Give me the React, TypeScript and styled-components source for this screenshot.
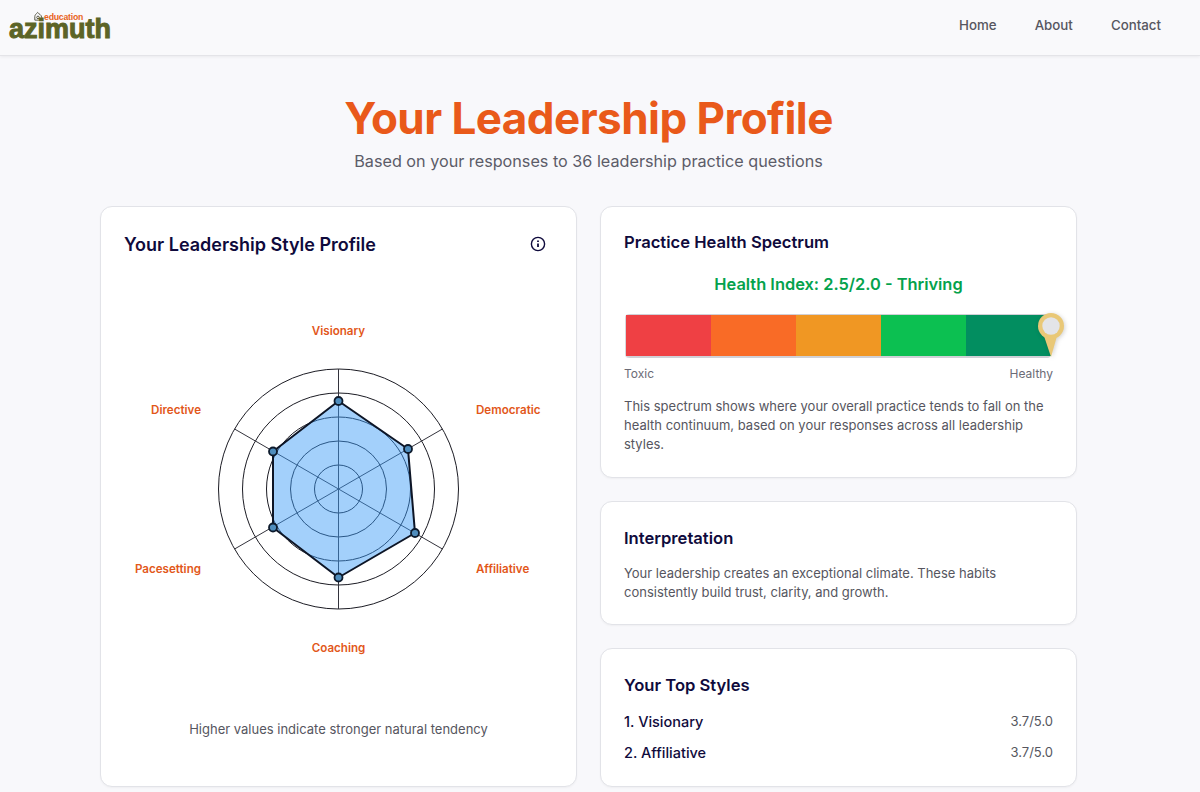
import React from 'react';
import styled, { createGlobalStyle } from 'styled-components';

const GlobalStyle = createGlobalStyle`
  * { box-sizing: border-box; }
  html, body { margin: 0; background: #f8f8fb; }
  body { font-family: Inter, "Liberation Sans", sans-serif; color: #0f0a3c; }
`;

const NAV_LINKS = ['Home', 'About', 'Contact'];
const SPECTRUM = ['#ef4044', '#f96b26', '#f09723', '#0cc051', '#028e60'];
const CENTER_X = 214.5;
const CENTER_Y = 209;
const RINGS = [24, 48, 72, 96, 120];
const SPOKES = [0, 60, 120, 180, 240, 300];

const AXIS_LABELS = [
  { text: 'Visionary', x: 214.5, y: 55, anchor: 'middle' },
  { text: 'Democratic', x: 352, y: 134, anchor: 'start' },
  { text: 'Affiliative', x: 352, y: 293, anchor: 'start' },
  { text: 'Coaching', x: 214.5, y: 372, anchor: 'middle' },
  { text: 'Pacesetting', x: 77, y: 293, anchor: 'end' },
  { text: 'Directive', x: 77, y: 134, anchor: 'end' },
];

const SCORE_POINTS = [
  [214.5, 121],
  [284, 169],
  [291, 253],
  [214.5, 297.5],
  [149, 247.5],
  [149, 171.5],
];

function spokeEnd(angle: number) {
  const radians = (angle * Math.PI) / 180;
  return {
    x: CENTER_X + 120 * Math.sin(radians),
    y: CENTER_Y - 120 * Math.cos(radians),
  };
}

function RadarChart() {
  return (
    <ChartSvg viewBox="0 0 429 400" width="429" height="400">
      {RINGS.map((radius) => (
        <circle key={radius} cx={CENTER_X} cy={CENTER_Y} r={radius} fill="none" stroke="#1c1c24" strokeWidth="1" />
      ))}
      {SPOKES.map((angle) => {
        const end = spokeEnd(angle);
        return <line key={angle} x1={CENTER_X} y1={CENTER_Y} x2={end.x} y2={end.y} stroke="#33333c" strokeWidth="1" />;
      })}
      <polygon
        points={SCORE_POINTS.map((point) => point.join(',')).join(' ')}
        fill="#3b9cf6"
        fillOpacity="0.47"
        stroke="#0d1526"
        strokeWidth="2"
        strokeLinejoin="round"
      />
      {SCORE_POINTS.map(([x, y]) => (
        <circle key={`${x}-${y}`} cx={x} cy={y} r="4" fill="#4f8dbd" stroke="#0d1a2c" strokeWidth="1.8" />
      ))}
      {AXIS_LABELS.map((label) => (
        <AxisLabel key={label.text} x={label.x} y={label.y} textAnchor={label.anchor}>
          {label.text}
        </AxisLabel>
      ))}
    </ChartSvg>
  );
}

function App() {
  return (
    <>
      <GlobalStyle />
      <Navbar>
        <Logo>
          <LogoTop>
            <svg width="10" height="11" viewBox="0 0 11 11" fill="none" stroke="#5a5a4a" strokeWidth="1.1">
              <path d="M2 9.5 V5.5 C2 3.5 4 2.5 5 1 C6 2.5 9.5 3.5 9.5 6.5 C9.5 8.5 8 9.5 6 9.5 z" />
              <circle cx="5.5" cy="6.5" r="1.4" />
            </svg>
            <span>education</span>
          </LogoTop>
          <LogoWord>azimuth</LogoWord>
        </Logo>
        <NavLinks>
          {NAV_LINKS.map((link) => (
            <NavLink key={link}>{link}</NavLink>
          ))}
        </NavLinks>
      </Navbar>

      <Main>
        <Header>
          <Title>Your Leadership Profile</Title>
          <Subtitle>Based on your responses to 36 leadership practice questions</Subtitle>
        </Header>

        <Columns>
          <ChartCard>
            <ChartHeader>
              <ChartTitle>Your Leadership Style Profile</ChartTitle>
              <svg width="16" height="16" viewBox="0 0 16 16" fill="none" stroke="#0f0a3c" strokeWidth="1.4">
                <circle cx="8" cy="8" r="6.6" />
                <path d="M8 7.4v3.6" strokeWidth="1.8" />
                <path d="M8 4.6v1.3" strokeWidth="1.8" />
              </svg>
            </ChartHeader>
            <RadarChart />
            <ChartNote>Higher values indicate stronger natural tendency</ChartNote>
          </ChartCard>

          <SideColumn>
            <SpectrumCard>
              <CardTitle>Practice Health Spectrum</CardTitle>
              <HealthIndex>Health Index: 2.5/2.0 - Thriving</HealthIndex>
              <SpectrumBar>
                {SPECTRUM.map((color) => (
                  <SpectrumSegment key={color} $color={color} />
                ))}
                <Marker>
                  <svg width="28" height="46" viewBox="0 0 28 46">
                    <path d="M7 24 L14 45 L20 24 z" fill="#e9c877" />
                    <circle cx="14" cy="14" r="13" fill="#e9c877" />
                    <circle cx="14" cy="14" r="8.7" fill="#e3e4e8" />
                  </svg>
                </Marker>
              </SpectrumBar>
              <SpectrumEnds>
                <span>Toxic</span>
                <span>Healthy</span>
              </SpectrumEnds>
              <BodyText>
                This spectrum shows where your overall practice tends to fall on the health continuum, based on your
                responses across all leadership styles.
              </BodyText>
            </SpectrumCard>

            <InterpretationCard>
              <CardTitle>Interpretation</CardTitle>
              <InterpretationText>
                Your leadership creates an exceptional climate. These habits consistently build trust, clarity, and
                growth.
              </InterpretationText>
            </InterpretationCard>

            <TopStylesCard>
              <CardTitle>Your Top Styles</CardTitle>
              <StyleList>
                <StyleRow>
                  <StyleName>1. Visionary</StyleName>
                  <StyleScore>3.7/5.0</StyleScore>
                </StyleRow>
                <StyleRow>
                  <StyleName>2. Affiliative</StyleName>
                  <StyleScore>3.7/5.0</StyleScore>
                </StyleRow>
              </StyleList>
            </TopStylesCard>
          </SideColumn>
        </Columns>
      </Main>
    </>
  );
}

const Navbar = styled.nav`
  height: 56px;
  display: flex;
  align-items: center;
  justify-content: space-between;
  padding: 0 39px 6px 9px;
  background: #f9f9fb;
  border-bottom: 1px solid #e4e4e8;
  box-shadow: 0 1px 3px rgba(0, 0, 0, 0.06);
`;

const Logo = styled.div`
  width: 102px;
  display: flex;
  flex-direction: column;
  margin-top: 1px;
`;

const LogoTop = styled.div`
  display: flex;
  align-items: center;
  gap: 1px;
  height: 9px;
  padding-left: 24px;
  font-family: "Liberation Sans", sans-serif;
  font-size: 8.7px;
  font-weight: 700;
  letter-spacing: -0.2px;
  color: #e8641c;
`;

const LogoWord = styled.div`
  font-family: "Liberation Sans", sans-serif;
  font-size: 27px;
  line-height: 17px;
  font-weight: 700;
  letter-spacing: 0;
  color: #5c6426;
  -webkit-text-stroke: 1px #5c6426;
`;

const NavLinks = styled.div`
  display: flex;
  gap: 38px;
`;

const NavLink = styled.a`
  font-size: 13.3px;
  font-weight: 500;
  color: #565660;
`;

const Main = styled.main`
  width: 977px;
  margin-left: 100px;
  padding-bottom: 5px;
`;

const Header = styled.header`
  padding-top: 34px;
  margin-bottom: 32px;
  text-align: center;
`;

const Title = styled.h1`
  margin: 0;
  font-size: 44px;
  line-height: 56px;
  font-weight: 700;
  letter-spacing: -0.55px;
  color: #e9591a;
`;

const Subtitle = styled.p`
  margin: 2px 0 0;
  font-size: 16.2px;
  line-height: 26px;
  color: #5c5c68;
`;

const Columns = styled.div`
  display: grid;
  grid-template-columns: 477px 477px;
  gap: 23px;
`;

const Card = styled.section`
  background: #ffffff;
  border: 1px solid #e2e3e8;
  border-radius: 12px;
  box-shadow: 0 1px 2px rgba(0, 0, 0, 0.04);
`;

const ChartCard = styled(Card)`
  height: 581px;
  padding: 23px 23px;
`;

const ChartHeader = styled.div`
  height: 28px;
  display: flex;
  align-items: center;
  justify-content: space-between;
  padding-right: 7px;
`;

const ChartTitle = styled.h2`
  margin: 0;
  font-size: 18px;
  font-weight: 600;
`;

const ChartSvg = styled.svg`
  display: block;
  margin: 22px 0 0;
`;

const AxisLabel = styled.text`
  font-size: 11.6px;
  font-weight: 600;
  fill: #e2571a;
`;

const ChartNote = styled.p`
  margin: 39px 0 0;
  font-size: 13px;
  line-height: 20px;
  text-align: center;
  color: #565660;
`;

const SideColumn = styled.div`
  display: flex;
  flex-direction: column;
  gap: 23px;
`;

const SpectrumCard = styled(Card)`
  height: 272px;
  padding: 23px 23px;
`;

const InterpretationCard = styled(Card)`
  height: 124px;
  padding: 24px 23px;
`;

const TopStylesCard = styled(Card)`
  height: 139px;
  padding: 24px 23px;
`;

const CardTitle = styled.h3`
  margin: 0;
  font-size: 16.6px;
  line-height: 24px;
  font-weight: 600;
`;

const HealthIndex = styled.div`
  margin-top: 17px;
  font-size: 16.4px;
  line-height: 26px;
  font-weight: 600;
  text-align: center;
  color: #04a24c;
`;

const SpectrumBar = styled.div`
  position: relative;
  display: flex;
  margin: 17px 2px 0 2px;
  height: 44px;
  border-top: 1px solid #d0d0d6;
  border-bottom: 2px solid #d0d0d6;
  border-radius: 4px;
  box-shadow: -1px 0 0 #d8d8dc;
`;

const SpectrumSegment = styled.div<{ $color: string }>`
  flex: 1;
  background: ${(props) => props.$color};
`;

const Marker = styled.div`
  position: absolute;
  right: -14px;
  top: -3px;
  height: 46px;
  filter: drop-shadow(1px 1px 2px rgba(0, 0, 0, 0.18));
`;

const SpectrumEnds = styled.div`
  display: flex;
  justify-content: space-between;
  margin-top: 8px;
  font-size: 12px;
  line-height: 16px;
  color: #6b6b76;
`;

const BodyText = styled.p`
  margin: 15px 0 0;
  font-size: 13px;
  line-height: 19px;
  color: #565660;
`;

const InterpretationText = styled(BodyText)`
  margin-top: 14px;
`;

const StyleList = styled.div`
  display: flex;
  flex-direction: column;
  gap: 7px;
  margin-top: 12px;
`;

const StyleRow = styled.div`
  display: flex;
  align-items: center;
  justify-content: space-between;
  height: 24px;
`;

const StyleName = styled.span`
  font-size: 14.5px;
  font-weight: 500;
`;

const StyleScore = styled.span`
  font-size: 13px;
  color: #565660;
`;

export default App;
